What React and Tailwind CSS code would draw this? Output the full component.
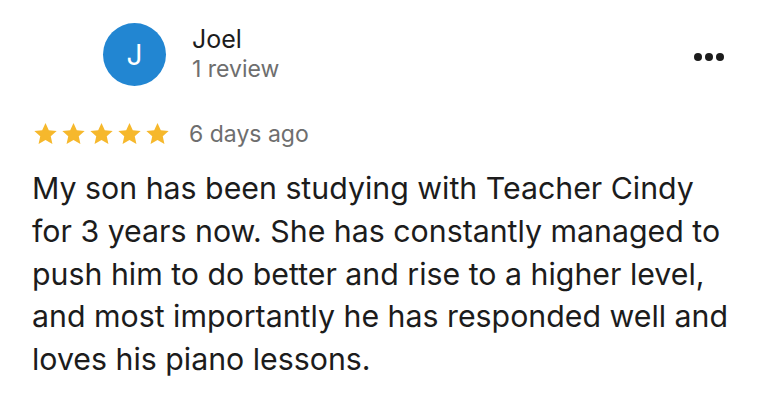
export default function App() {
  const Star = () => (
    <svg width="27" height="26" viewBox="0 0 24 24" className="block">
      <path d="M12 1.8l3.05 6.65 7.25.75-5.45 4.9 1.55 7.15L12 17.6l-6.4 3.65 1.55-7.15L1.7 9.2l7.25-.75z" fill="#f6b82c" />
    </svg>
  );
  return (
    <div className="w-[768px] h-[415px] bg-white overflow-hidden" style={{ fontFamily: "Inter, 'Liberation Sans', sans-serif" }}>
      <div className="flex items-start pt-[23px] pl-[103px] pr-[44px]">
        <div className="w-[63px] h-[63px] rounded-full bg-[#2286d2] flex items-center justify-center text-white text-[28px] font-normal">J</div>
        <div className="ml-[26px] flex flex-col">
          <div className="text-[25px] leading-[30px] text-[#1c1c1c] mt-[1px]">Joel</div>
          <div className="text-[23px] leading-[30px] text-[#6e6e6e] mt-[0px]">1 review</div>
        </div>
        <div className="ml-auto mt-[30px] flex gap-[3px]">
          <span className="w-[8px] h-[8px] rounded-full bg-[#1c1c1c]" />
          <span className="w-[8px] h-[8px] rounded-full bg-[#1c1c1c]" />
          <span className="w-[8px] h-[8px] rounded-full bg-[#1c1c1c]" />
        </div>
      </div>
      <div className="flex items-center pl-[32px] mt-[34px]">
        <div className="flex gap-[1px]">
          <Star /><Star /><Star /><Star /><Star />
        </div>
        <div className="ml-[18px] text-[23px] leading-[28px] text-[#6e6e6e]">6 days ago</div>
      </div>
      <div className="pl-[32px] pr-[10px] mt-[19px] text-[30.3px] leading-[42.8px] text-[#1c1c1c]">
        My son has been studying with Teacher Cindy<br />
        for 3 years now. She has constantly managed to<br />
        push him to do better and rise to a higher level,<br />
        and most importantly he has responded well and<br />
        loves his piano lessons.
      </div>
    </div>
  );
}
